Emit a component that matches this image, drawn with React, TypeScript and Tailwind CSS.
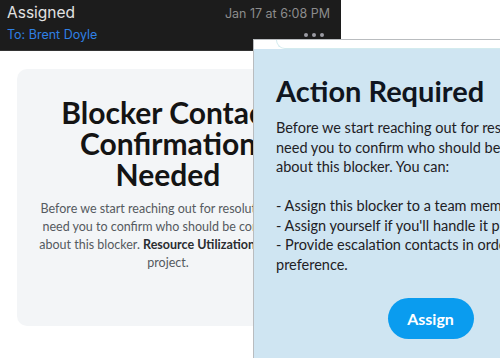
import React from "react";

const nunito = { fontFamily: "Lato, 'Noto Sans', sans-serif" };

function MailHeader(): React.ReactElement {
  return (
    <div
      className="w-[341px] h-[51px] bg-[#1c1c1c] border-b border-[#333] pl-[7px] pr-[11px] pt-[2px] flex flex-col"
      style={{ fontFamily: "Inter, 'Liberation Sans', sans-serif" }}
    >
      <div className="flex items-baseline justify-between">
        <span className="text-[15.5px] leading-[21px] text-[#e2e2e2]">Assigned</span>
        <span className="text-[12.5px] leading-[21px] text-[#8c8c8c]">Jan 17 at 6:08 PM</span>
      </div>
      <div className="flex items-center justify-between mt-[1px]">
        <span className="text-[12.5px] leading-[20px] text-[#2f80e4]">To: Brent Doyle</span>
        <div className="flex gap-[4px] pr-[6px]">
          <span className="w-[4px] h-[4px] rounded-full bg-[#9a9aa2]" />
          <span className="w-[4px] h-[4px] rounded-full bg-[#9a9aa2]" />
          <span className="w-[4px] h-[4px] rounded-full bg-[#9a9aa2]" />
        </div>
      </div>
    </div>
  );
}

function BlockerCard(): React.ReactElement {
  return (
    <div className="w-[302px] h-[257px] bg-[#f3f5f7] rounded-[10px] px-[17px] pt-[28px] text-center" style={nunito}>
      <h1 className="text-[30px] leading-[31px] font-bold text-[#141414]">
        Blocker Contact Confirmation Needed
      </h1>
      <p className="mt-[10px] text-[12.5px] leading-[18px] text-[#555a60]">
        Before we start reaching out for resolution, we need you to confirm who should be contacted
        about this blocker. <span className="font-bold text-[#2a2d31]">Resource Utilization</span>{" "}
        for this project.
      </p>
    </div>
  );
}

function ActionPanel(): React.ReactElement {
  return (
    <div
      className="absolute left-[253px] top-[39px] w-[354px] h-[330px] border-l border-t border-[#b9bcbf] bg-[#cfe5f2]"
      style={nunito}
    >
      <div className="h-[9px] bg-white relative">
        <div className="absolute left-[22px] top-0 w-[300px] h-[9px] border-l border-b border-[#d3ebee] rounded-bl-[12px]" />
      </div>
      <div className="px-[22px] pt-[24px] flex flex-col">
        <h2 className="text-[29px] leading-[36px] font-bold text-[#0f1520]">Action Required</h2>
        <p className="mt-[9px] text-[14.5px] leading-[19.5px] text-[#1e2125] whitespace-pre-line">
          {"Before we start reaching out for resolution, we need you to confirm who should be contacted about this blocker. You can:\n\n- Assign this blocker to a team member\n- Assign yourself if you'll handle it personally\n- Provide escalation contacts in order of preference."}
        </p>
        <button className="self-center mt-[24px] w-[86px] h-[41px] rounded-full bg-[#0a9cef] text-white text-[16px] font-bold">
          Assign
        </button>
      </div>
    </div>
  );
}

export default function App(): React.ReactElement {
  return (
    <div className="relative w-[500px] h-[358px] overflow-hidden bg-white">
      <MailHeader />
      <div className="pl-[17px] pt-[18px]">
        <BlockerCard />
      </div>
      <ActionPanel />
    </div>
  );
}
